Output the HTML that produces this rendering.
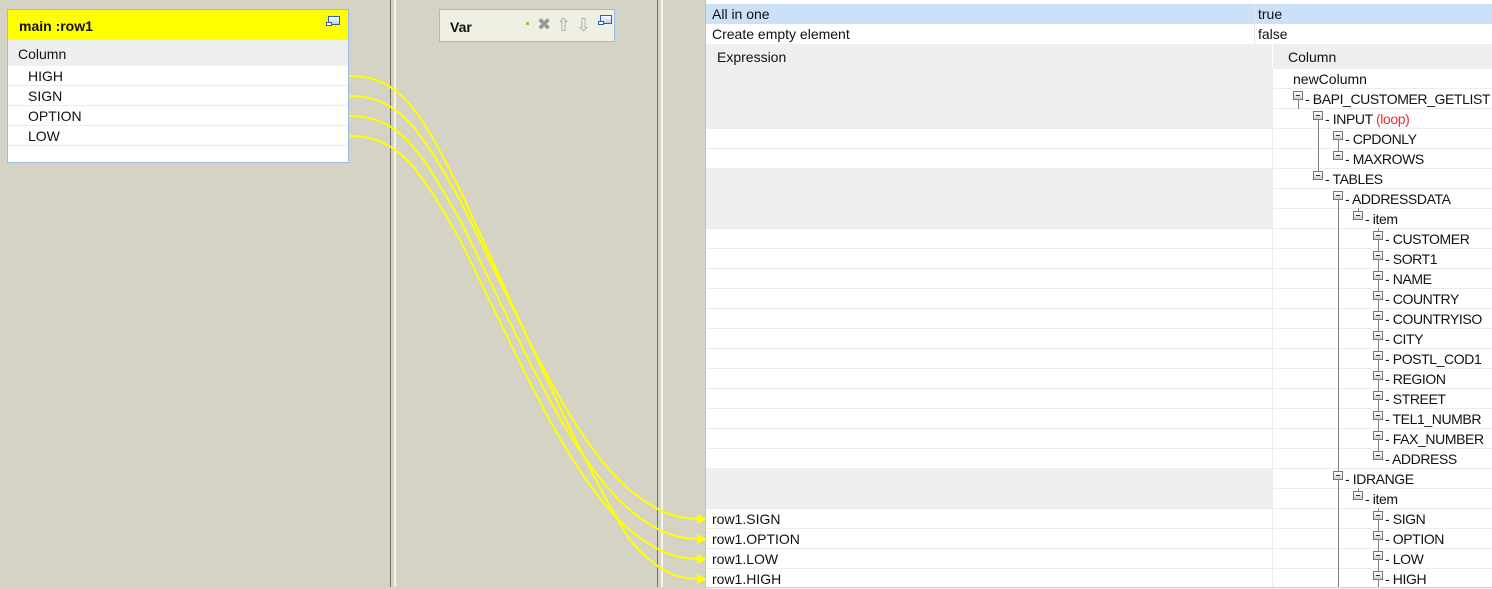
<!DOCTYPE html>
<html><head><meta charset="utf-8"><style>
*{margin:0;padding:0;box-sizing:border-box}
body{width:1492px;height:587px;overflow:hidden;background:#d4d3c5;font-family:"Liberation Sans","DejaVu Sans",sans-serif;font-size:14px;color:#111;position:relative}
.a{position:absolute}
.t{position:absolute;line-height:20px;white-space:nowrap}
.tr{letter-spacing:-0.4px}
.ic{position:absolute;width:10px;height:9px;border:1px solid #777;background:linear-gradient(#fff,#cfcfcf)}
.ic:after{content:"";position:absolute;left:2px;top:3px;width:4px;height:1px;background:#333}
.vl{position:absolute;width:1px;background:#808080}
</style></head><body>
<div class="a" style="left:390px;top:0;width:1px;height:587px;background:#707068"></div>
<div class="a" style="left:394px;top:0;width:2px;height:587px;background:#f4f4ee"></div>
<div class="a" style="left:657px;top:0;width:1px;height:587px;background:#707068"></div>
<div class="a" style="left:661px;top:0;width:2px;height:587px;background:#f4f4ee"></div>

<div class="a" style="left:7px;top:9px;width:342px;height:154px;border:1px solid #9ab8ec;background:#fff">
 <div class="a" style="left:0;top:0;width:340px;height:30px;background:#ffff00"></div>
 <div class="t" style="left:11px;top:6px;font-weight:bold;font-size:14px">main :row1</div>
 <div class="a" style="left:320px;top:6px;width:12px;height:9px;border:1px solid #2a5fb0;background:linear-gradient(#fff,#b8d0f0)"></div>
 <div class="a" style="left:318px;top:12px;width:6px;height:4px;border:1px solid #2a5fb0;background:#fff"></div>
 <div class="a" style="left:0;top:30px;width:340px;height:26px;background:#efefef"></div>
 <div class="t" style="left:10px;top:34px">Column</div>
 <div class="t" style="left:20px;top:56px">HIGH</div>
 <div class="t" style="left:20px;top:76px">SIGN</div>
 <div class="t" style="left:20px;top:96px">OPTION</div>
 <div class="t" style="left:20px;top:116px">LOW</div>
 <div class="a" style="left:0;top:75px;width:340px;height:1px;background:#ececec"></div>
 <div class="a" style="left:0;top:95px;width:340px;height:1px;background:#ececec"></div>
 <div class="a" style="left:0;top:115px;width:340px;height:1px;background:#ececec"></div>
 <div class="a" style="left:0;top:135px;width:340px;height:1px;background:#ececec"></div>
</div>

<div class="a" style="left:439px;top:9px;width:176px;height:33px;border:1px solid #9ab8ec;background:#f0efe4">
 <div class="t" style="left:10px;top:7px;font-weight:bold">Var</div>
 <div class="a" style="left:86px;top:12px;width:3px;height:3px;background:#8c4"></div>
 <div class="t" style="left:97px;top:5px;color:#999;font-size:17px;font-weight:bold">✖</div>
 <div class="t" style="left:116px;top:5px;color:#aaa;font-size:18px">⇧</div>
 <div class="t" style="left:136px;top:5px;color:#aaa;font-size:18px">⇩</div>
 <div class="a" style="left:160px;top:5px;width:12px;height:9px;border:1px solid #2a5fb0;background:linear-gradient(#fff,#b8d0f0)"></div>
 <div class="a" style="left:158px;top:11px;width:6px;height:4px;border:1px solid #2a5fb0;background:#fff"></div>
</div>

<div class="a" style="left:705px;top:0;width:787px;height:587px;background:#fff;border-left:1px solid #a8c4ec"></div>
<div class="a" style="left:706px;top:4px;width:786px;height:20px;background:#cce1f8"></div>
<div class="a" style="left:1254px;top:4px;width:1px;height:40px;background:#e8e8e8"></div>
<div class="t" style="left:712px;top:4px">All in one</div>
<div class="t" style="left:1258px;top:4px">true</div>
<div class="t" style="left:712px;top:24px">Create empty element</div>
<div class="t" style="left:1258px;top:24px">false</div>
<div class="a" style="left:706px;top:44px;width:786px;height:25px;background:#efefef"></div>
<div class="a" style="left:1272px;top:44px;width:1px;height:25px;background:#fff"></div>
<div class="t" style="left:717px;top:47px">Expression</div>
<div class="t" style="left:1288px;top:47px">Column</div>
<div class="a" style="left:706px;top:69px;width:566px;height:60px;background:#efefef"></div>
<div class="a" style="left:706px;top:169px;width:566px;height:60px;background:#efefef"></div>
<div class="a" style="left:706px;top:469px;width:566px;height:40px;background:#efefef"></div>
<div class="a" style="left:1272px;top:69px;width:1px;height:518px;background:#ececec"></div>
<div class="a" style="left:706px;top:69px;width:786px;height:520px;background:repeating-linear-gradient(to bottom,transparent 0,transparent 19px,#ececec 19px,#ececec 20px)"></div>

<div class="vl" style="left:1298px;top:99px;height:10px"></div>
<div class="vl" style="left:1318px;top:119px;height:60px"></div>
<div class="vl" style="left:1338px;top:139px;height:20px"></div>
<div class="vl" style="left:1338px;top:199px;height:388px"></div>
<div class="vl" style="left:1358px;top:208px;height:10px"></div>
<div class="vl" style="left:1378px;top:228px;height:230px"></div>
<div class="vl" style="left:1358px;top:488px;height:10px"></div>
<div class="vl" style="left:1378px;top:508px;height:79px"></div>

<div class="t" style="left:1293px;top:69px">newColumn</div>
<div class="ic" style="left:1293px;top:91px"></div><div class="t tr" style="left:1305px;top:89px">- BAPI_CUSTOMER_GETLIST</div>
<div class="ic" style="left:1313px;top:111px"></div><div class="t tr" style="left:1325px;top:109px">- INPUT <span style="color:#e8303a">(loop)</span></div>
<div class="ic" style="left:1333px;top:131px"></div><div class="t tr" style="left:1345px;top:129px">- CPDONLY</div>
<div class="ic" style="left:1333px;top:151px"></div><div class="t tr" style="left:1345px;top:149px">- MAXROWS</div>
<div class="ic" style="left:1313px;top:171px"></div><div class="t tr" style="left:1325px;top:169px">- TABLES</div>
<div class="ic" style="left:1333px;top:191px"></div><div class="t tr" style="left:1345px;top:189px">- ADDRESSDATA</div>
<div class="ic" style="left:1353px;top:211px"></div><div class="t tr" style="left:1365px;top:209px">- item</div>
<div class="ic" style="left:1373px;top:231px"></div><div class="t tr" style="left:1385px;top:229px">- CUSTOMER</div>
<div class="ic" style="left:1373px;top:251px"></div><div class="t tr" style="left:1385px;top:249px">- SORT1</div>
<div class="ic" style="left:1373px;top:271px"></div><div class="t tr" style="left:1385px;top:269px">- NAME</div>
<div class="ic" style="left:1373px;top:291px"></div><div class="t tr" style="left:1385px;top:289px">- COUNTRY</div>
<div class="ic" style="left:1373px;top:311px"></div><div class="t tr" style="left:1385px;top:309px">- COUNTRYISO</div>
<div class="ic" style="left:1373px;top:331px"></div><div class="t tr" style="left:1385px;top:329px">- CITY</div>
<div class="ic" style="left:1373px;top:351px"></div><div class="t tr" style="left:1385px;top:349px">- POSTL_COD1</div>
<div class="ic" style="left:1373px;top:371px"></div><div class="t tr" style="left:1385px;top:369px">- REGION</div>
<div class="ic" style="left:1373px;top:391px"></div><div class="t tr" style="left:1385px;top:389px">- STREET</div>
<div class="ic" style="left:1373px;top:411px"></div><div class="t tr" style="left:1385px;top:409px">- TEL1_NUMBR</div>
<div class="ic" style="left:1373px;top:431px"></div><div class="t tr" style="left:1385px;top:429px">- FAX_NUMBER</div>
<div class="ic" style="left:1373px;top:451px"></div><div class="t tr" style="left:1385px;top:449px">- ADDRESS</div>
<div class="ic" style="left:1333px;top:471px"></div><div class="t tr" style="left:1345px;top:469px">- IDRANGE</div>
<div class="ic" style="left:1353px;top:491px"></div><div class="t tr" style="left:1365px;top:489px">- item</div>
<div class="ic" style="left:1373px;top:511px"></div><div class="t tr" style="left:1385px;top:509px">- SIGN</div>
<div class="ic" style="left:1373px;top:531px"></div><div class="t tr" style="left:1385px;top:529px">- OPTION</div>
<div class="ic" style="left:1373px;top:551px"></div><div class="t tr" style="left:1385px;top:549px">- LOW</div>
<div class="ic" style="left:1373px;top:571px"></div><div class="t tr" style="left:1385px;top:569px">- HIGH</div>

<div class="t" style="left:712px;top:509px">row1.SIGN</div>
<div class="t" style="left:712px;top:529px">row1.OPTION</div>
<div class="t" style="left:712px;top:549px">row1.LOW</div>
<div class="t" style="left:712px;top:569px">row1.HIGH</div>

<svg class="a" style="left:0;top:0" width="1492" height="587">
<g fill="none" stroke="#ffff00" stroke-width="2">
<path d="M349 76 C400 76,420 110,460 190 C520 320,580 460,630 540 C660 575,680 579,700 579"/>
<path d="M349 96 C400 96,420 130,460 200 C520 320,570 440,630 490 C660 515,680 519,700 519"/>
<path d="M349 116 C400 116,420 150,460 220 C520 340,570 460,630 510 C660 535,680 539,700 539"/>
<path d="M349 136 C400 136,420 170,460 240 C520 360,570 480,630 530 C660 555,680 559,700 559"/>
</g>
<g fill="#ffff00">
<path d="M697 514 L707 519 L697 524Z"/>
<path d="M697 534 L707 539 L697 544Z"/>
<path d="M697 554 L707 559 L697 564Z"/>
<path d="M697 574 L707 579 L697 584Z"/>
</g>
</svg>
</body></html>
